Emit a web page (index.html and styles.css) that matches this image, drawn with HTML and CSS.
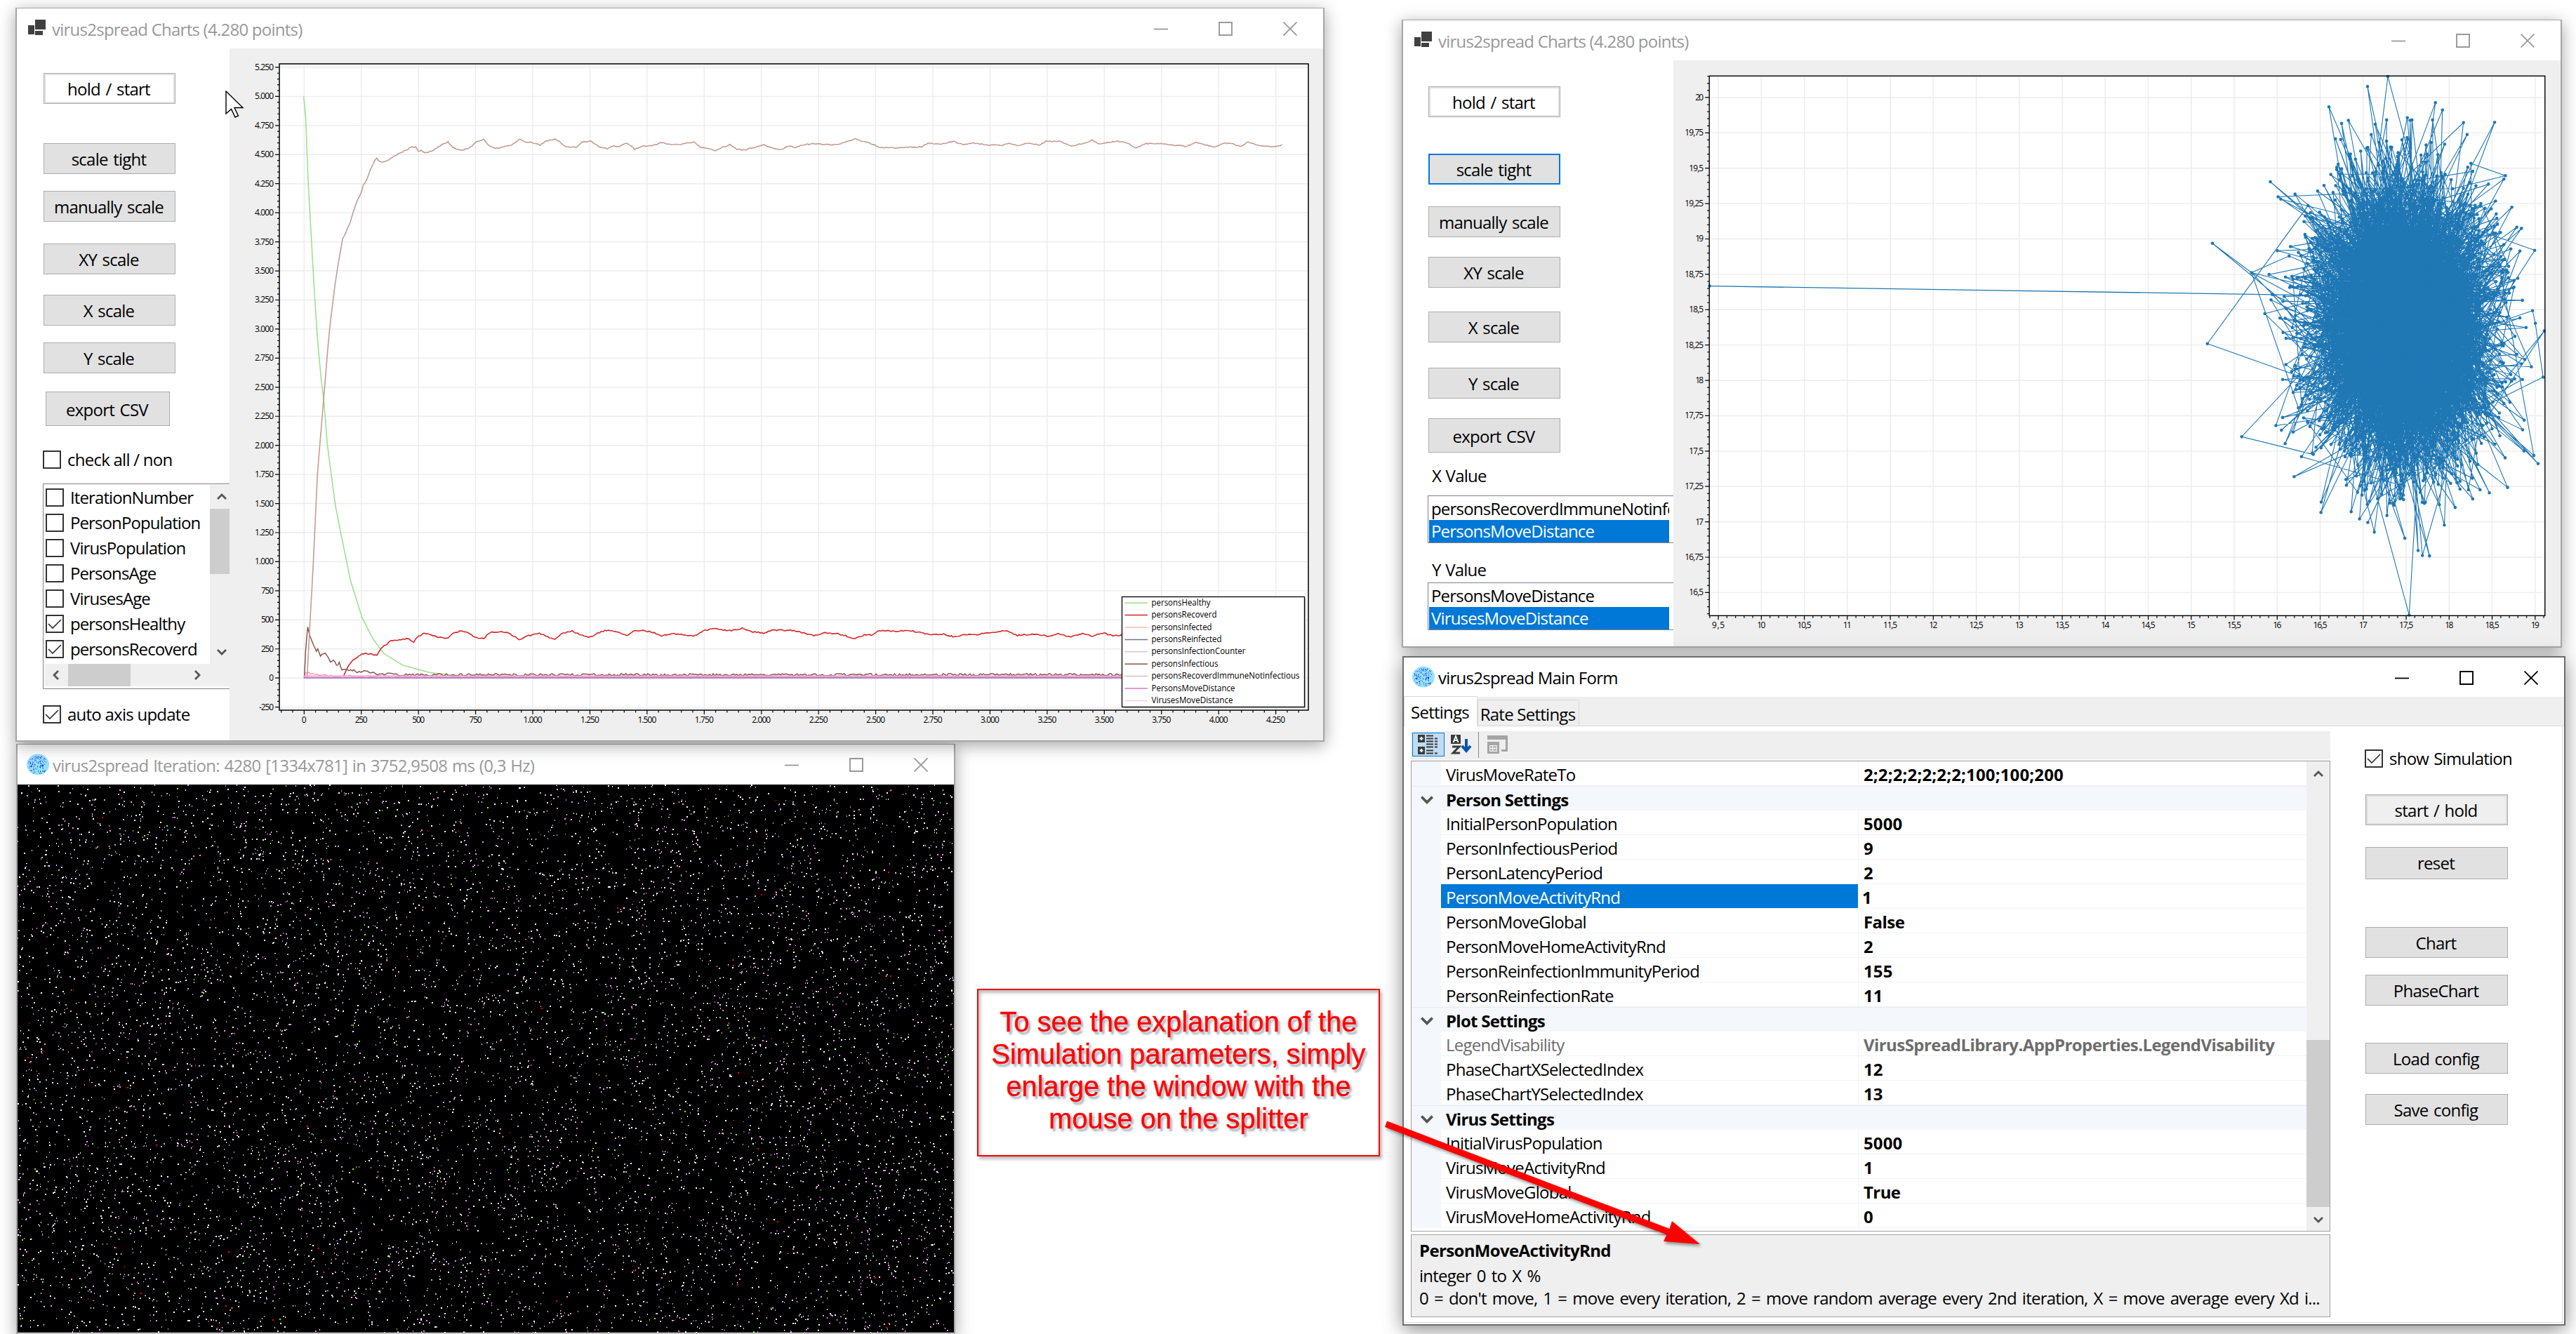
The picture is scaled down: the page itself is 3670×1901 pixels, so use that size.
FILE: index.html
```html
<!DOCTYPE html>
<html lang="en">
<head>
<meta charset="utf-8">
<title>virus2spread</title>
<link rel="stylesheet" href="styles.css">
</head>
<body>
<svg class="defs" width="0" height="0">
  <symbol id="i-app" viewBox="0 0 26 24"><path d="M0 8h9v13H0zM10 0h15v14H10zM10 16h11v6H10z" fill="#404040"/></symbol>
  <symbol id="i-virus" viewBox="0 0 32 30"><ellipse cx="16" cy="15" rx="16" ry="15" fill="#93e2fb"/><path id="virus-dots" fill="#1a35e0"/></symbol>
  <symbol id="i-min" viewBox="0 0 20 20"><path d="M0 10.5h20" stroke="currentColor" stroke-width="1.8"/></symbol>
  <symbol id="i-max" viewBox="0 0 20 20"><path d="M1 1h18v18H1z" fill="none" stroke="currentColor" stroke-width="1.9"/></symbol>
  <symbol id="i-close" viewBox="0 0 20 20"><path d="M.5.5l19 19M19.5.5l-19 19" stroke="currentColor" stroke-width="1.8"/></symbol>
  <symbol id="i-tick" viewBox="0 0 26 26"><path d="M4 13l6 6L22 7" fill="none" stroke="#333" stroke-width="1.7"/></symbol>
  <symbol id="i-chev" viewBox="0 0 14 10"><path d="M1 8l6-6 6 6" fill="none" stroke="#555" stroke-width="2.8"/></symbol>
</svg>

<section class="window sim">
  <header class="titlebar"><svg class="vicon"><use href="#i-virus"/></svg><span class="t-sim">virus2spread Iteration: 4280 [1334x781] in 3752,9508 ms (0,3 Hz)</span>
    <div class="controls"><svg><use href="#i-min"/></svg><svg><use href="#i-max"/></svg><svg><use href="#i-close"/></svg></div></header>
  <canvas id="world" width="1334" height="781"></canvas>
</section>

<section class="window charts">
  <header class="titlebar"><svg class="aicon"><use href="#i-app"/></svg><span>virus2spread Charts (4.280 points)</span>
    <div class="controls"><svg><use href="#i-min"/></svg><svg><use href="#i-max"/></svg><svg><use href="#i-close"/></svg></div></header>
  <div class="client">
    <aside class="side side-a">
      <div class="btn white">hold / start</div>
      <div class="btn g56">scale tight</div>
      <div class="btn g24">manually scale</div>
      <div class="btn g31">XY scale</div>
      <div class="btn g29">X scale</div>
      <div class="btn g24">Y scale</div>
      <div class="btn export g26">export CSV</div>
      <label class="check all"><i></i>check all / non</label>
      <div class="checklist">
        <div class="items">
          <label class="check"><i></i>IterationNumber</label>
          <label class="check"><i></i>PersonPopulation</label>
          <label class="check"><i></i>VirusPopulation</label>
          <label class="check"><i></i>PersonsAge</label>
          <label class="check"><i></i>VirusesAge</label>
          <label class="check"><i><svg><use href="#i-tick"/></svg></i>personsHealthy</label>
          <label class="check"><i><svg><use href="#i-tick"/></svg></i>personsRecoverd</label>
        </div>
        <div class="vscroll"><svg class="chev"><use href="#i-chev"/></svg><b></b><svg class="chev down"><use href="#i-chev"/></svg></div>
        <div class="hscroll"><svg class="chev left"><use href="#i-chev"/></svg><b></b><svg class="chev right"><use href="#i-chev"/></svg></div>
      </div>
      <label class="check auto"><i><svg><use href="#i-tick"/></svg></i>auto axis update</label>
    </aside>
    <svg id="chart" class="plot" viewBox="327 69 1558 986"></svg>
  </div>
</section>

<section class="window phase">
  <header class="titlebar"><svg class="aicon"><use href="#i-app"/></svg><span>virus2spread Charts (4.280 points)</span>
    <div class="controls"><svg><use href="#i-min"/></svg><svg><use href="#i-max"/></svg><svg><use href="#i-close"/></svg></div></header>
  <div class="client">
    <aside class="side side-b">
      <div class="btn white">hold / start</div>
      <div class="btn focus g52">scale tight</div>
      <div class="btn g31">manually scale</div>
      <div class="btn g28">XY scale</div>
      <div class="btn g34">X scale</div>
      <div class="btn g36">Y scale</div>
      <div class="btn tall g28">export CSV</div>
      <div class="lbl lx">X Value</div>
      <div class="list"><div>personsRecoverdImmuneNotinfectious</div><div class="sel">PersonsMoveDistance</div></div>
      <div class="lbl ly">Y Value</div>
      <div class="list"><div>PersonsMoveDistance</div><div class="sel">VirusesMoveDistance</div></div>
    </aside>
    <svg id="phase" class="plot" viewBox="2384 86 1264 836"></svg>
  </div>
</section>

<section class="window main">
  <header class="titlebar"><svg class="vicon"><use href="#i-virus"/></svg><span>virus2spread Main Form</span>
    <div class="controls"><svg><use href="#i-min"/></svg><svg><use href="#i-max"/></svg><svg><use href="#i-close"/></svg></div></header>
  <nav class="tabs"><div class="tab on">Settings</div><div class="tab">Rate Settings</div></nav>
  <div class="page">
    <div class="grid">
      <div class="toolbar">
        <div class="tool on"><svg width="30" height="28" viewBox="0 0 30 28"><path d="M0 0h10v11H0zM0 17h10v11H0z" fill="#3b3b3b"/><path d="M2.500 5.500h5M5 3v5M2.500 22.500h5M5 20v5" stroke="#fff" stroke-width="1.800"/><path d="M12 1.500h10M12 5.500h10M12 9.500h10M12 13.500h10M12 17.500h10M12 22.500h10M12 26.500h10M24 5.500h4M24 9.500h4M24 13.500h4M24 17.500h4M24 26.500h4" stroke="#3b3b3b" stroke-width="1.800"/></svg></div>
        <div class="tool az"><svg width="32" height="28" viewBox="0 0 32 28"><path d="M0 0h14v13H0z" fill="#3b3b3b"/><path d="M3.500 11L7 2l3.500 9M5 8h4" fill="none" stroke="#fff" stroke-width="1.800"/><path d="M2 17h10L3 26h10" fill="none" stroke="#3b3b3b" stroke-width="3"/><path d="M22 6v17M16 16l6 7 6-7" fill="none" stroke="#0a56a8" stroke-width="4"/></svg></div>
        <div class="tsep"></div>
        <div class="tool pages"><svg width="29" height="26" viewBox="0 0 29 26"><path d="M0 0h29v23h-9v-3h6V6H0z" fill="#a5a5a5"/><path d="M0 9h17v17H0z" fill="#a5a5a5"/><path d="M3 14h11v9H3z" fill="#efefef"/><path d="M4 16.500h3M8 16.500h5M4 20.500h3M8 20.500h5" stroke="#a5a5a5" stroke-width="2"/></svg></div>
      </div>
      <div class="props">
        <div class="rows">
          <div class="row"><span>VirusMoveRateTo</span><b>2;2;2;2;2;2;2;100;100;200</b></div>
          <div class="row cat"><svg><use href="#i-chev"/></svg><span>Person Settings</span></div>
          <div class="row"><span>InitialPersonPopulation</span><b>5000</b></div>
          <div class="row"><span>PersonInfectiousPeriod</span><b>9</b></div>
          <div class="row"><span>PersonLatencyPeriod</span><b>2</b></div>
          <div class="row hot"><span>PersonMoveActivityRnd</span><b>1</b></div>
          <div class="row"><span>PersonMoveGlobal</span><b class="word">False</b></div>
          <div class="row"><span>PersonMoveHomeActivityRnd</span><b>2</b></div>
          <div class="row"><span>PersonReinfectionImmunityPeriod</span><b>155</b></div>
          <div class="row"><span>PersonReinfectionRate</span><b>11</b></div>
          <div class="row cat"><svg><use href="#i-chev"/></svg><span>Plot Settings</span></div>
          <div class="row off"><span>LegendVisability</span><b class="word">VirusSpreadLibrary.AppProperties.LegendVisability</b></div>
          <div class="row"><span>PhaseChartXSelectedIndex</span><b>12</b></div>
          <div class="row"><span>PhaseChartYSelectedIndex</span><b>13</b></div>
          <div class="row cat"><svg><use href="#i-chev"/></svg><span>Virus Settings</span></div>
          <div class="row"><span>InitialVirusPopulation</span><b>5000</b></div>
          <div class="row"><span>VirusMoveActivityRnd</span><b>1</b></div>
          <div class="row"><span>VirusMoveGlobal</span><b class="word">True</b></div>
          <div class="row"><span>VirusMoveHomeActivityRnd</span><b>0</b></div>
        </div>
        <div class="pscroll"><svg class="chev"><use href="#i-chev"/></svg><b></b><svg class="chev down"><use href="#i-chev"/></svg></div>
      </div>
      <div class="desc"><h3>PersonMoveActivityRnd</h3><p>integer 0 to X %</p><p class="p2">0 = don't move, 1 = move every iteration, 2 = move random average every 2nd iteration, X = move average every Xd i...</p></div>
    </div>
    <div class="actions">
      <label class="check"><i><svg><use href="#i-tick"/></svg></i>show Simulation</label>
      <div class="btn light g34">start / hold</div>
      <div class="btn mid g31">reset</div>
      <div class="btn g68">Chart</div>
      <div class="btn g24">PhaseChart</div>
      <div class="btn g53">Load config</div>
      <div class="btn g29">Save config</div>
    </div>
  </div>
</section>

<div class="callout">To see the explanation of the<br>Simulation parameters, simply<br>enlarge the window with the<br>mouse on the splitter</div>
<svg class="arrow" viewBox="1960 1580 480 210"><path d="M1976 1597.500L2378.500 1751 2382 1740 2422 1773 2370 1769 2374.500 1759.500 1973 1606z" fill="#f00"/></svg>
<svg class="cursor" viewBox="0 0 27 40"><path d="M1 1v32l7.500-6.500 5.500 11.500 4.500-2-5.500-11.500H25z" fill="#fff" stroke="#000" stroke-width="1.400"/></svg>
<script src="plots.js"></script>
</body>
</html>
```

FILE: styles.css
```css
* { box-sizing: border-box; }
body { margin: 0; width: 3670px; height: 1901px; overflow: hidden; position: relative; background: #fff; color: #000;
  font: 24px/32px "Open Sans", "Noto Sans", sans-serif; letter-spacing: -0.75px; white-space: nowrap; }
.defs { position: absolute; }
svg { display: block; }

.window { position: absolute; display: flex; flex-direction: column; background: #fff; border: 1px solid #a6a6a6;
  box-shadow: 0 5px 22px rgba(0,0,0,.36); }
.charts { left: 22px; top: 11px; width: 1865px; height: 1046px; border-width: 1px 2px 2px; }
.sim { left: 23px; top: 1060px; width: 1338px; height: 842px; border-width: 1px 2px 2px; }
.phase { left: 1997px; top: 28px; width: 1653px; height: 895px; border-width: 1px 2px 2px; }
.main { left: 1998px; top: 935px; width: 1657px; height: 954px; border: 2px solid #6e6e6e; box-shadow: 0 6px 26px rgba(0,0,0,.46); }

.titlebar { display: flex; align-items: center; height: 57px; flex: none; color: #999; padding: 4px 37px 0 16px; }
.titlebar span { flex: 1; padding-bottom: 2px; }
.titlebar .t-sim { letter-spacing: -0.72px; word-spacing: 1.1px; }
.main .titlebar { height: 56px; color: #000; padding: 4px 37px 0 12px; }
.aicon { width: 26px; height: 24px; margin: 0 8px 6px 0; }
.vicon { width: 32px; height: 31px; margin: 0 5px 5px 0; }
.sim .titlebar { padding-left: 13px; }
.controls { display: flex; gap: 72px; padding-bottom: 3px; }
.controls svg { width: 20px; height: 20px; }

.client { display: flex; flex: 1; min-height: 0; }
.side { flex: none; display: flex; flex-direction: column; overflow: hidden; }
.side-a { width: 303px; padding: 35px 0 0 38px; }
.side-b { width: 385px; padding: 37px 0 0 36px; }
.plot { flex: 1; min-width: 0; background: #efefef; font-size: 12px; letter-spacing: 0; }

.btn { flex: none; width: 188px; height: 44px; background: #e1e1e1; border: 1px solid #adadad; text-align: center; line-height: 43px; padding-right: 2px; word-spacing: 2px; }
.btn.white { background: #fff; box-shadow: inset 0 0 0 2px #e1e1e1; }
.btn.light { background: #efefef; box-shadow: inset 0 0 0 2px #dcdcdc; }
.btn.focus { border: 2px solid #0078d7; line-height: 41px; }
.btn.tall { height: 49px; line-height: 50px; }
.btn.mid { height: 46px; }
.btn.export { width: 177px; height: 49px; margin-left: 3px; line-height: 49px; }
.g24 { margin-top: 24px; } .g26 { margin-top: 26px; } .g28 { margin-top: 28px; } .g29 { margin-top: 29px; }
.g31 { margin-top: 31px; } .g34 { margin-top: 34px; } .g36 { margin-top: 36px; }
.g52 { margin-top: 52px; } .g53 { margin-top: 53px; } .g56 { margin-top: 56px; } .g68 { margin-top: 68px; }

.check { display: flex; align-items: center; height: 36px; flex: none; }
.check i { width: 26px; height: 26px; border: 2px solid #333; margin: 0 9px 1px 0; background: #fff; }
.check i svg { width: 26px; height: 26px; margin: -2px; }
.check.all { margin: 30px 0 16px -1px; }
.check.auto { margin: 18px 0 0 -1px; }
.checklist { display: grid; grid-template: 255px 35px / 237px 28px; height: 293px; margin-left: -1px; border: 1px solid #7f828a; border-right: 0; padding-top: 1px; overflow: hidden; }
.items { padding: 0 0 0 3px; overflow: hidden; letter-spacing: -0.9px; }
.vscroll, .hscroll, .pscroll { background: #efefef; display: flex; align-items: center; }
.vscroll, .pscroll { flex-direction: column; }
.vscroll b { width: 28px; height: 93px; background: #cdcdcd; }
.chev { width: 14px; height: 10px; flex: none; }
.down { transform: rotate(180deg); }
.left { transform: rotate(-90deg); }
.right { transform: rotate(90deg); }
.vscroll .chev { margin: 12px 0 12px 5px; }
.vscroll .down { margin: auto 0 12px 5px; }
.hscroll { grid-column: 1 / 3; height: 32px; padding: 0 39px 0 10px; margin-left: 1px; }
.hscroll b { width: 89px; height: 32px; margin-left: 10px; background: #cdcdcd; }
.hscroll .right { margin-left: auto; }

.lbl { height: 32px; margin-left: 5px; line-height: 32px; word-spacing: 1px; }
.lx { margin-top: 17px; margin-bottom: 12px; }
.ly { margin-top: 22px; margin-bottom: 2px; }
.list { height: 68px; flex: none; margin-left: -1px; border: 1px solid #7f828a; border-right: 0; padding: 1px 6px 1px 1px; letter-spacing: -0.82px; }
.list div { height: 32px; line-height: 32px; padding-left: 3px; overflow: hidden; }
.list div.sel { background: #0078d7; color: #fff; }
.list div:first-child { margin-top: 1px; }

.tabs { display: flex; align-items: flex-end; height: 42px; flex: none; background: #efefef; border-bottom: 1px solid #d9d9d9; }
.tab { width: 145px; height: 37px; border: 1px solid #d9d9d9; border-bottom: 0; text-align: center; line-height: 40px; padding-right: 2px; }
.tab.on { width: 105px; height: 43px; margin-bottom: -1px; background: #fff; line-height: 44px; }
.page { display: flex; flex: 1; min-height: 0; border-right: 1px solid #d9d9d9; border-bottom: 1px solid #d9d9d9; margin: 0 2px 2px 0; }
.grid { width: 1310px; margin: 7px 0 0 10px; display: flex; flex-direction: column; }
.toolbar { height: 42px; flex: none; display: flex; align-items: center; padding: 0 0 2px 2px; background: #efefef; border-bottom: 2px solid #f6f6f6; }
.tool { width: 46px; height: 34px; display: flex; align-items: center; justify-content: center; }
.tool.on { background: #c0dcf3; border: 1px solid #0078d7; }
.tool.az { padding-left: 4px; }
.tsep { width: 1px; height: 37px; background: #8a8a8a; margin: 0 12px 0 2px; }
.tool.pages { width: 29px; }
.props { display: flex; height: 671px; flex: none; border: 1px solid #a0a0a0; }
.rows { flex: 1; }
.row { display: flex; height: 35px; background: linear-gradient(90deg, #f4f7fc 42px, transparent 42px); line-height: 37px; }
.row span { width: 595px; margin-left: 42px; padding-left: 7px; border-bottom: 1px solid #f0f3f8; border-right: 1px solid #f0f3f8; }
.row b { flex: 1; padding-left: 7px; border-bottom: 1px solid #f0f3f8; letter-spacing: 0.15px; }
.row b.word { letter-spacing: -0.57px; }
.row.cat { background: #f4f7fc; font-weight: 700; border-top: 1px solid #e9edf3; }
.row.cat span { margin-left: 11px; border: 0; }
.row.cat svg { width: 18px; height: 13px; margin: 12px 0 0 13px; transform: rotate(180deg); }
.row.hot span { background: #0078d7; color: #fff; }
.row.hot b { padding-left: 5px; }
.row.off { color: #6d6d6d; }
.pscroll { width: 33px; }
.pscroll b { width: 33px; height: 238px; margin-top: 374px; background: #cdcdcd; }
.pscroll .chev { margin-top: 13px; }
.desc { height: 118px; margin-top: 4px; flex: none; background: #efefef; border: 1px solid #a0a0a0; padding: 6px 11px; }
.desc h3 { margin: 0; font-size: 24px; line-height: 32px; letter-spacing: -0.65px; }
.desc p { margin: 4px 0 0; word-spacing: 2.5px; }
.desc p.p2 { margin-top: 0; }
.actions { margin-left: 49px; padding-top: 28px; }
.actions .check { height: 36px; margin-bottom: -1px; word-spacing: 1.5px; }
.actions .btn { width: 203px; margin-left: 1px; }

.callout { position: absolute; left: 1392px; top: 1409px; width: 574px; height: 239px; border: 2.5px solid #f00; padding: 22px 0 0; text-align: center;
  color: #f00; font: 39.8px/46px "Liberation Sans", Arial, sans-serif; letter-spacing: 0; -webkit-text-stroke: .4px #f00; text-shadow: 3px 4px 3px rgba(70,90,110,.5);
  box-shadow: 3px 4px 4px rgba(0,0,0,.25), inset 3px 4px 4px rgba(0,0,0,.25); }
.arrow { position: absolute; left: 1960px; top: 1580px; width: 480px; height: 210px; filter: drop-shadow(2px 3px 2px rgba(0,0,0,.4)); }
.cursor { position: absolute; left: 321px; top: 129px; width: 27px; height: 40px; }
```

FILE: plots.js
```js
const NS = 'http://www.w3.org/2000/svg';
let seed = 20231;
function rnd() {
  seed = (seed + 0x6D2B79F5) | 0;
  let t = Math.imul(seed ^ (seed >>> 15), 1 | seed);
  t = (t + Math.imul(t ^ (t >>> 7), 61 | t)) ^ t;
  return ((t ^ (t >>> 14)) >>> 0) / 4294967296;
}
function gauss() { return Math.sqrt(-2 * Math.log(rnd() + 1e-9)) * Math.cos(6.28318 * rnd()); }
function add(parent, tag, attrs, text) {
  const e = document.createElementNS(NS, tag);
  for (const k in attrs) e.setAttribute(k, attrs[k]);
  if (text) e.textContent = text;
  parent.appendChild(e);
  return e;
}

/* speckles of the virus icon */
let dots = '';
for (let i = 0; i < 150; i++) {
  const x = 3 + Math.floor(rnd() * 26), y = 1 + Math.floor(rnd() * 28);
  if (Math.hypot(x - 16, y - 15) < 14) dots += `M${x} ${y}h1v1h-1z`;
}
document.getElementById('virus-dots').setAttribute('d', dots);

/* frame, grid lines, ticks and labels */
function axes(svg, o) {
  add(svg, 'rect', { x: o.l, y: o.t, width: o.r - o.l, height: o.b - o.t, fill: '#fff' });
  let grid = '', tick = '';
  o.xs.forEach(([p, label]) => {
    grid += `M${p} ${o.t}V${o.b}`; tick += `M${p} ${o.b}v6`;
    add(svg, 'text', { x: p, y: o.b + 17.500, 'text-anchor': 'middle', textLength: label.length > 4 ? 27 : label.length > 3 ? 20 : label.length * 6 }, label);
  });
  o.ys.forEach(([p, label]) => {
    grid += `M${o.l} ${p}H${o.r}`; tick += `M${o.l} ${p}h-6`;
    add(svg, 'text', { x: o.l - 8, y: p + 4, 'text-anchor': 'end', textLength: label.length > 4 ? 27 : label.length > 3 ? 21 : label.length * 6 }, label);
  });
  for (let p = o.x0; p < o.r; p += o.dx) if (p > o.l) tick += `M${p} ${o.b}v3.500`;
  for (let p = o.y0; p > o.t; p -= o.dy) if (p < o.b) tick += `M${o.l} ${p}h-3`;
  add(svg, 'path', { d: grid, stroke: '#ececec', 'stroke-width': 1.4 });
  add(svg, 'path', { d: tick, stroke: '#000', 'stroke-width': 1.2 });
}
function dot3(n) { return Math.abs(n) >= 1000 ? (n / 1000).toFixed(3) : String(n); }

/* time series */
const chart = document.getElementById('chart');
const xs = [], ys = [];
for (let v = 0; v <= 4250; v += 250) xs.push([433.3 + v * .32572, dot3(v)]);
for (let v = -250; v <= 5250; v += 250) ys.push([966.2 - v * .16576, dot3(v)]);
axes(chart, { l: 398, t: 91, r: 1864, b: 1012, xs, ys, x0: 433.3 - 32.572, dx: 16.286, y0: 966.2 + 41.44, dy: 8.288 });

const layer = add(chart, 'g', { transform: 'translate(380 130) scale(.95663 .57398)', fill: 'none' });
function series(str, color, noise, width) {
  const p = str.split(' ').map(s => s.split(',').map(Number));
  let d = 'M' + p[0];
  for (let i = 1; i < p.length; i++) {
    const [ax, ay] = p[i - 1], [bx, by] = p[i];
    const n = noise ? Math.max(1, Math.round((bx - ax) / 2.5)) : 1;
    for (let k = 1; k <= n; k++) {
      const f = k / n;
      d += `L${(ax + (bx - ax) * f).toFixed(1)} ${(ay + (by - ay) * f + (rnd() - .5) * noise).toFixed(1)}`;
    }
  }
  add(layer, 'path', { d, stroke: color, 'stroke-width': width || 1.3, 'vector-effect': 'non-scaling-stroke' });
}
series('55,13 58,62 61.5,217 65.7,343 70.8,493 75.5,613 81,714 85,767 90.4,879 102,1026 111.4,1106 124.5,1213 141.8,1306 158,1359 174.4,1396 202.5,1425 226.7,1436 242,1443 261,1447 300,1453 1512,1455', '#98df8a', 0, 1.5);
series('114.7,1451 121.7,1426 129,1411 139.5,1399 147,1396 164,1400 170,1384 185,1364 210,1360 219,1367 224,1356 235,1345 250,1352 260,1357 270,1358 277,1346 290,1340 300,1345 310,1356 323,1359 333,1343 345,1342 360,1345 376,1361 390,1352 406,1346 418,1354 429,1361 440,1346 455,1340 468,1350 482,1355 493,1345 506,1338 524,1342 536,1353 546,1340 560,1339 575,1343 588,1352 605,1347 625,1350 638,1352 650,1339 668,1333 685,1340 697,1338 708,1333 722,1342 740,1345 752,1338 770,1338 785,1339 800,1345 815,1351 830,1345 850,1347 862,1352 874,1359 890,1350 903,1350 912,1339 935,1341 955,1338 970,1343 990,1350 1008,1348 1022,1354 1040,1350 1060,1348 1075,1345 1100,1339 1118,1351 1135,1349 1150,1349 1165,1354 1178,1347 1198,1355 1215,1346 1230,1353 1245,1345 1260,1352 1280,1350', '#d62728', 3, 1.6);
series('56,1456 58,1443 70,1448 100,1452 140,1453 1512,1453', '#ff9896', 5);
series('56,1456 58,1390 61,1332 64,1350 70,1375 74,1388 76,1382 80,1401 87,1396 92,1408 95,1420 99,1411 104,1425 108,1420 112,1435 125,1436 135,1442 150,1441 165,1448 185,1446 200,1449 1280,1448.500', '#8c564b', 6, 1.5);
series('60,1456 69.4,1168 75.5,951 89,679 93.7,590 100.7,493 105.4,439 113,367 118,350 124,327 129,299 135,270 141,251 144,232 149,220 154,196 161,171 164,167 168,175 178,174 190,161 205,148 217,138 222,139 226,150 230,147 236,153 248,147 258,136 270,126 277,140 291,147 303,139 311,127 323,119 330,134 340,142 355,137 365,134 376,119 385,126 395,127 407,134 416,124 429,118 438,128 446,138 461,139 470,126 482,124 494,137 507,143 515,136 525,138 536,128 548,144 560,137 568,136 576,135 588,127 600,132 613,133 636,126 646,139 658,142 668,147 678,140 690,132 700,144 712,146 725,140 741,133 755,143 768,144 777,136 787,140 800,133 815,130 830,133 850,132 865,125 876,118 888,125 898,128 912,139 930,141 955,139 975,138 985,129 1005,131 1023,125 1038,132 1052,128 1075,134 1095,134 1105,130 1120,135 1135,128 1150,134 1160,125 1180,124 1198,136 1215,130 1230,122 1240,131 1265,124 1280,127 1295,141 1310,130 1335,130 1350,134 1370,137 1384,126 1398,133 1413,139 1425,129 1437,129 1450,138 1462,125 1474,133 1490,137 1505,138 1512,132', '#c49c94', 2.5, 1.6);
series('55,1452 1512,1452', '#f1a3d3', 0, 2);
series('55,1456.500 1512,1456.500', '#b07fcc', 0, 1.8);
add(chart, 'rect', { x: 398, y: 91, width: 1466, height: 921, fill: 'none', stroke: '#000', 'stroke-width': 1.5 });

add(chart, 'rect', { x: 1600.5, y: 852.5, width: 260, height: 157, fill: '#c9c9c9' });
add(chart, 'rect', { x: 1598.5, y: 850.5, width: 260, height: 157, fill: '#fff', stroke: '#000', 'stroke-width': 1.3 });
[['personsHealthy', '#98df8a', 84], ['personsRecoverd', '#d62728', 93], ['personsInfected', '#ffbcbb', 86], ['personsReinfected', '#6f7480', 100],
 ['personsInfectionCounter', '#d3c6dd', 134], ['personsInfectious', '#8c564b', 95], ['personsRecoverdImmuneNotinfectious', '#d9c1bc', 211],
 ['PersonsMoveDistance', '#d77cc0', 119], ['VirusesMoveDistance', '#f7cfe2', 116]].forEach(([name, color, w], i) => {
  const y = 859.2 + i * 17.4;
  add(chart, 'path', { d: `M1602.500 ${y}h32.500`, stroke: color, 'stroke-width': 1.5 });
  add(chart, 'text', { x: 1640.5, y: y + 3.6, textLength: w, lengthAdjust: 'spacingAndGlyphs' }, name);
});

/* phase portrait */
const phase = document.getElementById('phase');
const px = [], py = [];
for (let v = 9.5; v <= 19; v += .5) px.push([2447.4 + (v - 9.5) * 122.64, String(v).replace('.', ',')]);
for (let v = 16.5; v <= 20; v += .25) py.push([139 + (20 - v) * 201.8, String(v).replace('.', ',')]);
axes(phase, { l: 2434.5, t: 108.3, r: 3626.5, b: 878.3, xs: px, ys: py, x0: 2435.2, dx: 24.528 / 2, y0: 875.6, dy: 10.09 });

const outliers = '894,79 960,53 769,132 832,167 810,175 919,177 956,166 1023,160 1032,167 1114,121 1137,140 1105,166 1205,173 1306,172 1217,204 906,204 579,327 604,366 613,372 659,359 602,506 575,568 585,620 581,634 561,670 619,841 597,961 619,940 615,973 627,1008 656,1094 680,1042 743,1187 744,1160 841,1185 868,1204 895,1213 916,1238 957,1195 1015,1254 1058,1286 1072,1299 1095,1300 1029,1454 1143,1220 1127,1167 1178,1174 1235,1152 1289,1136 1348,1122 1259,1128 1221,1128 1447,1060 1433,1039 1401,1027 1425,808 1396,635 1436,505 1388,507 1393,448 1378,445 1362,393 1309,377 1336,320 1286,333 1396,841 1404,789 790,215 807,217 931,224 1144,229 1038,166 680,907 653,978 630,734 650,706 1388,681 1408,706 1372,729 1402,947 1397,972 1340,1045 1369,601'
  .split(' ').map(s => [s.split(',').map(Number)]);
outliers.push([[518, 563], [391, 487], [620, 638]], [[701, 389], [375, 748], [670, 832], [486, 990], [718, 1036]],
  [[1229, 279], [1341, 311], [1170, 345]], [[1300, 900], [1463, 835], [1438, 695], [1429, 662]], [[1330, 850], [1467, 715], [1290, 930]],
  [[518, 563], [670, 915]], [[640, 520], [518, 563]]);
const pts = [[3288, 421]];
const toPx = ([x, y]) => [2980 + x / 2.2725, 80 + y / 1.8233];
function blob() {
  for (;;) {
    const a = gauss(), b = gauss();
    if (Math.hypot(a, b) < 2.75) return [3423 + a * 64, 463 + b * 98];
  }
}
for (let i = 0; i < 4150; i++) {
  pts.push(blob());
  if (i % 45 === 20 && outliers.length) outliers.shift().forEach(p => pts.push(toPx(p)));
}
const f = p => p[0].toFixed(1) + ' ' + p[1].toFixed(1);
add(phase, 'path', { d: 'M2435 408L3288 421', stroke: '#1f77b4', 'stroke-width': 1.3 });
add(phase, 'path', { d: 'M' + pts.map(f).join('L'), fill: 'none', stroke: '#1f77b4', 'stroke-width': 1.1 });
add(phase, 'path', { d: 'M2435 408h0' + pts.map(p => 'M' + f(p) + 'h0').join(''), fill: 'none', stroke: '#1f77b4', 'stroke-width': 4.6, 'stroke-linecap': 'round' });
add(phase, 'rect', { x: 2434.5, y: 108.3, width: 1192, height: 770, fill: 'none', stroke: '#000', 'stroke-width': 1.4 });

/* simulated world */
const g = document.getElementById('world').getContext('2d');
g.fillStyle = '#000';
g.fillRect(0, 0, 1334, 781);
[['#dda0dd', 4400], ['#ffffff', 4500], ['#7fff00', 210], ['#ff0000', 60], ['#8b2f8b', 130], ['#808080', 60]].forEach(([c, n]) => {
  g.fillStyle = c;
  for (let i = 0; i < n; i++) g.fillRect(Math.floor(rnd() * 1334), Math.floor(rnd() * 781), rnd() < .5 ? 1 : 2, rnd() < .08 ? 1 : 2);
});
```
